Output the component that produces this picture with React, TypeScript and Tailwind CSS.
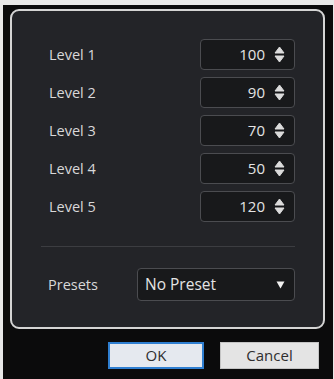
import React from 'react';

const levels = [
  { label: 'Level 1', value: 100 },
  { label: 'Level 2', value: 90 },
  { label: 'Level 3', value: 70 },
  { label: 'Level 4', value: 50 },
  { label: 'Level 5', value: 120 },
];

const Spinner = () => (
  <svg width="11" height="17" viewBox="0 0 11 17" className="shrink-0">
    <path d="M5.5 1 L10 7 L1 7 Z" fill="#dcdcdc" stroke="#dcdcdc" strokeWidth="1" strokeLinejoin="round" />
    <path d="M1 10 L10 10 L5.5 16 Z" fill="#dcdcdc" stroke="#dcdcdc" strokeWidth="1" strokeLinejoin="round" />
  </svg>
);

export default function App() {
  return (
    <div
      className="w-[334px] h-[379px] bg-[#e8e8e8] pt-[5px] pl-[3px] pr-[1px] overflow-hidden"
      style={{ fontFamily: '"Open Sans", "Noto Sans", sans-serif' }}
    >
      <div className="h-full bg-[#0b0b0c] pt-[4px] pl-[7px] pr-[8px] flex flex-col">
        <div className="h-[320px] rounded-[9px] border-2 border-[#d4d4d4] bg-[#232428] pt-[28px] pl-[37px] pr-[28px] flex flex-col">
          <div className="flex flex-col gap-[7px]">
            {levels.map((l) => (
              <div key={l.label} className="flex items-center justify-between h-[31px]">
                <span className="text-[14.5px] font-medium text-[#d8d8d8]">{l.label}</span>
                <div className="w-[95px] h-[31px] rounded-[4px] border border-[#4b4c50] bg-[#18191b] flex items-center justify-end gap-[9px] pr-[9px]">
                  <span className="text-[15px] font-medium text-[#e4e4e4]">{l.value}</span>
                  <Spinner />
                </div>
              </div>
            ))}
          </div>
          <div className="mt-[24px] h-px bg-[#3c3d41] -ml-[8px]" />
          <div className="mt-[21px] flex items-center h-[33px]">
            <span className="text-[14.5px] font-medium text-[#d8d8d8] w-[89px] -ml-[1px]">Presets</span>
            <div className="flex-1 h-[33px] rounded-[4px] border border-[#4b4c50] bg-[#18191b] flex items-center justify-between pl-[7px] pr-[9px]">
              <span className="text-[15.5px] font-medium text-[#e4e4e4]">No Preset</span>
              <svg width="9" height="8" viewBox="0 0 9 8">
                <path d="M0.5 0.5 L8.5 0.5 L4.5 7.5 Z" fill="#f0f0f0" />
              </svg>
            </div>
          </div>
        </div>
        <div className="mt-[13px] flex justify-end gap-[16px] pr-[6px]">
          <button className="w-[96px] h-[27px] bg-[#e5e9ef] border-2 border-[#2f7fd1] text-[15px] text-[#2e2e2e] flex items-center justify-center">
            OK
          </button>
          <button className="w-[99px] h-[27px] bg-[#e4e4e4] border border-[#c4c4c4] text-[15px] text-[#2e2e2e] flex items-center justify-center">
            Cancel
          </button>
        </div>
      </div>
    </div>
  );
}
